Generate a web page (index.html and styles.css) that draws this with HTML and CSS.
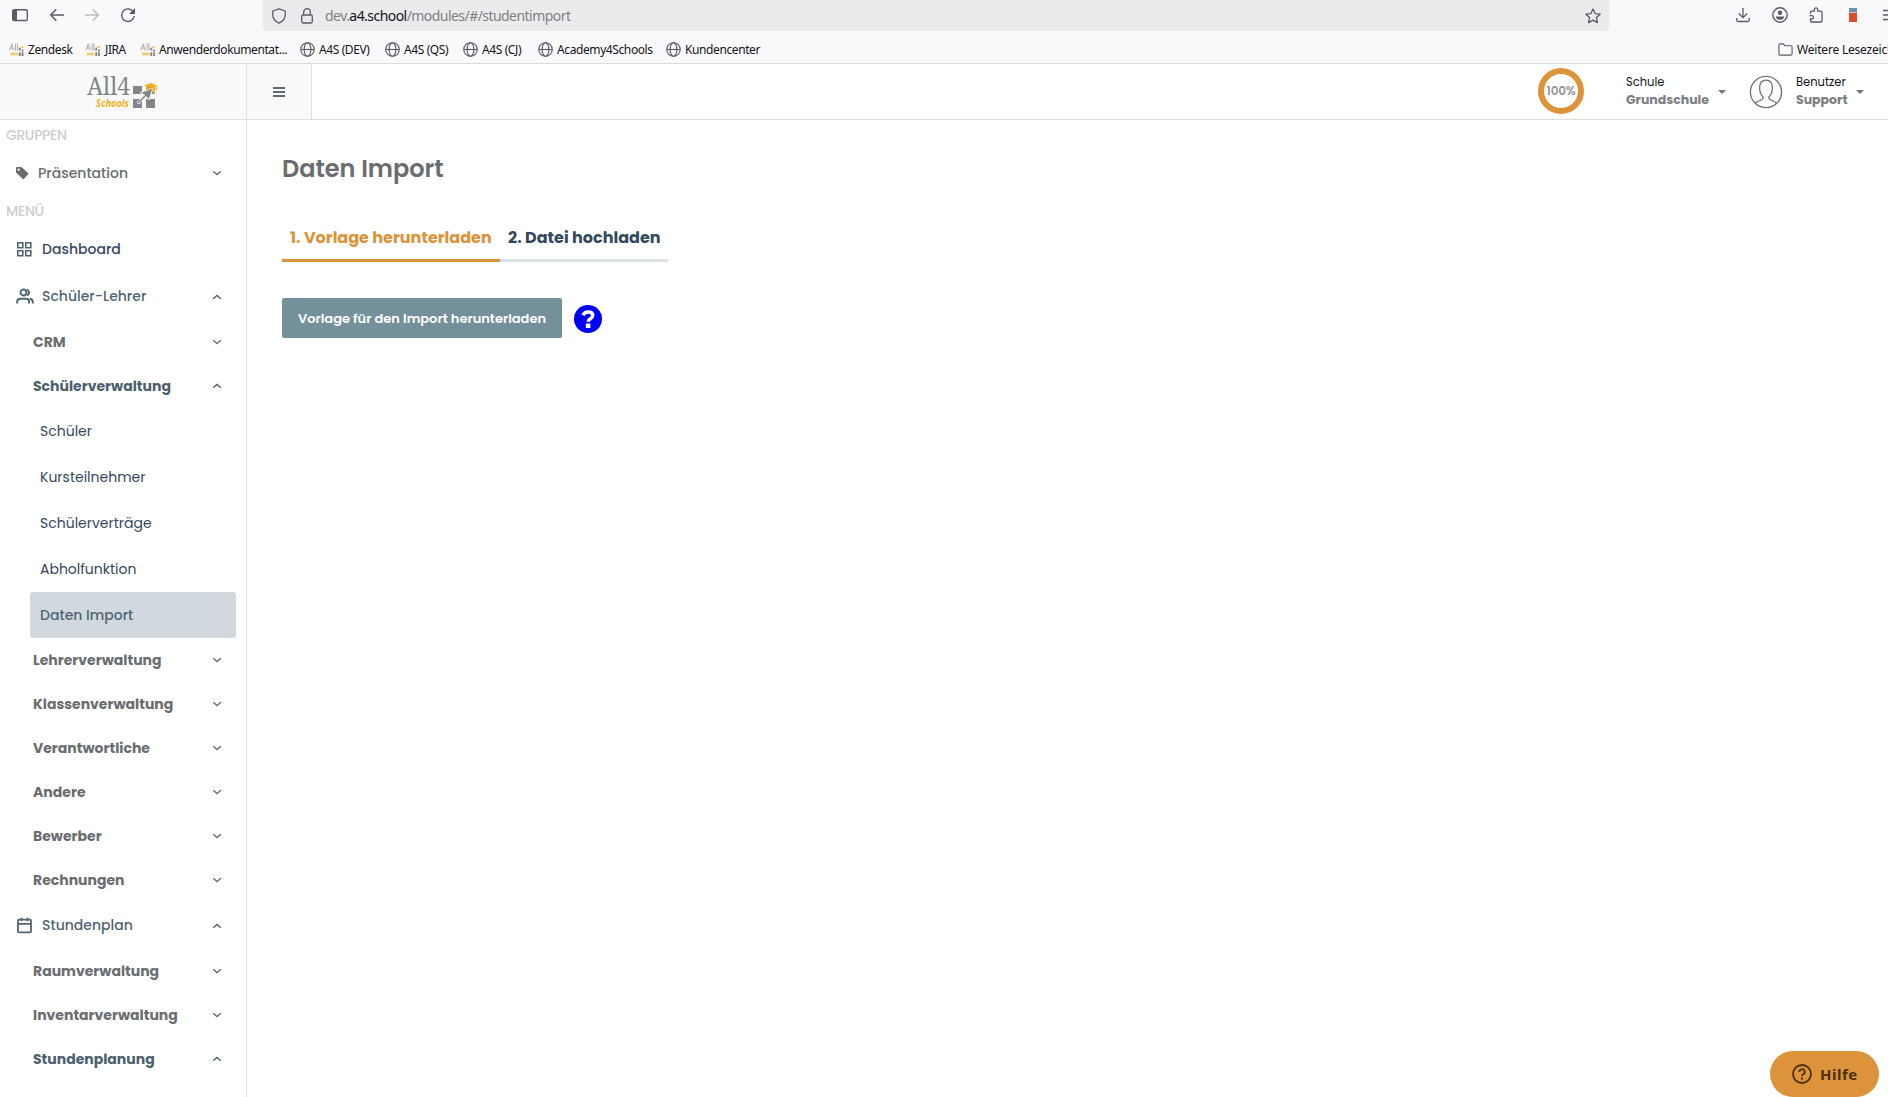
FILE: index.html
```
<!DOCTYPE html>
<html lang="de">
<head>
    <meta charset="UTF-8">
    <meta name="viewport" content="width=device-width, initial-scale=1.0">
    <title>Daten Import</title>
    <link rel="stylesheet" href="styles.css">
</head>
<body>
    <svg class="sprite" width="0" height="0">
        <symbol id="globe" viewBox="0 0 16 16">
            <g fill="none" stroke="#5b5b66" stroke-width="1.2">
                <circle cx="8" cy="8" r="7.2"/>
                <ellipse cx="8" cy="8" rx="3.6" ry="7.2"/>
                <path d="M1 8h14"/>
            </g>
        </symbol>
        <symbol id="down" viewBox="0 0 10 6"><path d="M1.2 1.2 5 4.6 8.8 1.2" fill="none" stroke="currentColor" stroke-width="1.3"/></symbol>
        <symbol id="up" viewBox="0 0 10 6"><path d="M1.2 4.8 5 1.4 8.8 4.8" fill="none" stroke="currentColor" stroke-width="1.3"/></symbol>
        <symbol id="favicon" viewBox="0 0 16 16">
            <path d="m1 9 2.500-7L5.500 9M2 6.500h3M7.500 1.500V9M9.500 1.500V9" fill="none" stroke="#a5a5a5" stroke-width="1"/>
            <path d="M11 6h2v3h-2zM14 8h2v2h-2zM11 11h2v4h-2zM14 11h2v4h-2z" fill="#858585"/>
            <path d="M2 11.500h8v2.500H2zM13 4.500h3v2h-3z" fill="#f6c766"/>
        </symbol>
    </svg>

    <!-- Browser toolbar -->
    <div class="toolbar">
        <div class="nav-buttons">
            <svg width="18" height="16" viewBox="0 0 18 16"><rect x="1.7" y="2.7" width="14.6" height="10.800" rx="1.5" fill="none" stroke="#5b5b66" stroke-width="1.4"/><path d="M2 3h4v10H2z" fill="#5b5b66"/></svg>
            <svg width="16" height="16" viewBox="0 0 16 16"><path d="M15 8H2M7.300 2.300 1.700 8l5.600 5.700" fill="none" stroke="#5b5b66" stroke-width="1.4"/></svg>
            <svg width="16" height="16" viewBox="0 0 16 16"><path d="M1 8h13M8.700 2.300 14.300 8l-5.600 5.700" fill="none" stroke="#bcbcc2" stroke-width="1.4"/></svg>
            <svg width="16" height="16" viewBox="0 0 16 16"><path d="M13.600 5.200A6.300 6.300 0 1 0 14.300 9" fill="none" stroke="#5b5b66" stroke-width="1.4"/><path d="M15 1v6H9z" fill="#5b5b66"/></svg>
        </div>
        <div class="url-bar">
            <svg width="16" height="16" viewBox="0 0 16 16"><path d="M8 .9 14.300 3v3.500c0 3.800-2.400 7-6.300 8.600C4.100 13.500 1.700 10.300 1.700 6.500V3z" fill="none" stroke="#5b5b66" stroke-width="1.3" stroke-linejoin="round"/></svg>
            <svg class="lock" width="14" height="16" viewBox="0 0 14 16"><rect x="1.7" y="7" width="10.600" height="8" rx="1.4" fill="none" stroke="#5b5b66" stroke-width="1.3"/><path d="M3.700 7V4a3.300 3.300 0 0 1 6.600 0v3" fill="none" stroke="#5b5b66" stroke-width="1.3"/></svg>
            <span class="url">dev.<b>a4.school</b>/modules/#/studentimport</span>
            <svg class="star" width="16" height="16" viewBox="0 0 16 16"><path d="m8 1 2.100 4.600 5 .6-3.700 3.400 1 5L8 12.100l-4.400 2.500 1-5L.9 6.200l5-.6z" fill="none" stroke="#5b5b66" stroke-width="1.3" stroke-linejoin="round"/></svg>
        </div>
        <div class="tool-icons">
            <svg width="16" height="16" viewBox="0 0 16 16"><path d="M8 1v9.500M3.800 6.500 8 10.700l4.200-4.200M1.700 11v2c0 1 .6 1.500 1.500 1.500h9.600c.9 0 1.500-.5 1.500-1.500v-2" fill="none" stroke="#5b5b66" stroke-width="1.3"/></svg>
            <svg width="16" height="16" viewBox="0 0 16 16"><circle cx="8" cy="8" r="7.200" fill="none" stroke="#5b5b66" stroke-width="1.4"/><circle cx="8" cy="5.700" r="2.200" fill="#5b5b66"/><path d="M3.800 9.500h8.400c0 2-1.800 3.300-4.200 3.300s-4.200-1.300-4.200-3.300z" fill="#5b5b66"/></svg>
            <svg width="16" height="16" viewBox="0 0 16 16"><path d="M2.500 7V5.200c0-.6.4-1 1-1H6.300V2.500a1.700 1.700 0 0 1 3.400 0v1.700H13c.6 0 1 .4 1 1V14c0 .6-.4 1-1 1H3.500c-.6 0-1-.4-1-1v-2h1.300a1.700 1.700 0 0 0 0-3.400H1.500" fill="none" stroke="#5b5b66" stroke-width="1.3"/></svg>
            <svg width="16" height="16" viewBox="0 0 16 16"><path d="M4 1h8v5H4z" fill="#6f8fac"/><path d="M4 6h8v9H4z" fill="#d94f2b"/><path d="M4 5.500h8" stroke="#b9c4cc"/></svg>
            <svg width="16" height="16" viewBox="0 0 16 16"><path d="M1 3.500h14M1 8h14M1 12.500h14" stroke="#5b5b66" stroke-width="1.3"/></svg>
        </div>
    </div>
    <div class="bookmarks">
        <span class="bm bm-zendesk"><svg><use href="#favicon"/></svg>Zendesk</span>
        <span class="bm bm-jira"><svg><use href="#favicon"/></svg>JIRA</span>
        <span class="bm bm-docs"><svg><use href="#favicon"/></svg>Anwenderdokumentat...</span>
        <span class="bm bm-dev"><svg><use href="#globe"/></svg>A4S (DEV)</span>
        <span class="bm bm-qs"><svg><use href="#globe"/></svg>A4S (QS)</span>
        <span class="bm bm-cj"><svg><use href="#globe"/></svg>A4S (CJ)</span>
        <span class="bm bm-academy"><svg><use href="#globe"/></svg>Academy4Schools</span>
        <span class="bm"><svg><use href="#globe"/></svg>Kundencenter</span>
        <span class="bm bm-more"><svg viewBox="0 0 16 16"><path d="M1 12.500v-9C1 2.600 1.600 2 2.500 2h3l2 2h6c.9 0 1.500.6 1.500 1.500v7c0 .9-.6 1.500-1.500 1.500h-11C1.600 14 1 13.400 1 12.500z" fill="none" stroke="#5b5b66" stroke-width="1.2"/></svg>Weitere Lesezeichen</span>
    </div>

    <!-- App header -->
    <header class="header">
        <div class="brand">
            <svg width="72" height="36" viewBox="0 0 72 36">
                <text x="1" y="21" font-family="Noto Serif, Liberation Serif, serif" font-size="26" textLength="43" lengthAdjust="spacingAndGlyphs" fill="#858585">All4</text>
                <text class="logo-sub" x="10" y="33" textLength="33" lengthAdjust="spacingAndGlyphs">Schools</text>
                <path d="M47 12h9v8h-9zM60 12h9v8h-9zM47 25h9v9h-9zM60 25h9v9h-9z" fill="#858585"/>
                <path d="m51 28.500 7.500-7.500-4-2.500L67 14l-4 12-3-3.500-7 7.500z" fill="#858585" stroke="#f8f9fb" stroke-width="1"/>
                <path d="m58 11.500 7-2.500 6 2.500-6 2.500zM60 12.500h2v2h5v-2h2v7h-2v-4h-7zM69.700 11.500h1.200v5h-1.200z" fill="#f5b11c"/>
            </svg>
        </div>
        <div class="menu-toggle"><i></i><i></i><i></i></div>
        <div class="progress">100%</div>
        <div class="picker school">
            <div><span>Schule</span><strong>Grundschule</strong></div>
            <i class="caret"></i>
        </div>
        <svg class="avatar" width="34" height="34" viewBox="0 0 34 34"><g fill="none" stroke="#6f7376" stroke-width="1.3"><circle cx="17" cy="17" r="15.600"/><path d="M6.500 28.500c1-2 3-2.500 5-3.200 2.200-.8 3-1.300 2.600-3.300-2-2-3.500-4.500-3.500-9 0-5.500 2.500-7.800 6.400-7.800s6.400 2.300 6.400 7.800c0 4.500-1.500 7-3.500 9-.4 2 .4 2.500 2.600 3.300 2 .7 4 1.200 5 3.200"/></g></svg>
        <div class="picker user">
            <div><span>Benutzer</span><strong>Support</strong></div>
            <i class="caret"></i>
        </div>
    </header>

    <div class="layout">
        <nav class="sidebar">
            <h6>GRUPPEN</h6>
            <a class="item group"><svg width="14" height="14" viewBox="0 0 14 14"><path d="M1 2v4.500l6.500 6.200c.5.500 1 .5 1.500 0l4-4.200c.5-.5.5-1 0-1.500L6.500 1H2C1.400 1 1 1.400 1 2z" fill="currentColor"/><circle cx="3.700" cy="3.700" r="1.100" fill="#fff"/></svg><span>Präsentation</span><svg class="chev"><use href="#down"/></svg></a>
            <h6>MENÜ</h6>
            <a class="item dashboard"><svg width="17" height="17" viewBox="0 0 17 17"><path d="M1.800 1.800h5v5h-5zM9.800 1.800h5v5h-5zM1.800 9.800h5v5h-5zM9.800 9.800h5v5h-5z" fill="none" stroke="#506572" stroke-width="1.6"/></svg><span>Dashboard</span></a>
            <a class="item"><svg width="18" height="17" viewBox="0 0 18 17"><g fill="none" stroke="currentColor" stroke-width="1.9"><circle cx="7.500" cy="4.500" r="3"/><path d="M1.200 15.500v-1.500c0-2 1.200-3.200 3.200-3.200h5.500c2 0 3.200 1.200 3.200 3.200v1.500M11 1.700a3 3 0 0 1 0 5.700M13.800 10.800c1.900.3 3 1.500 3 3.200v1.500"/></g></svg><span class="wide">Schüler-Lehrer</span><svg class="chev"><use href="#up"/></svg></a>
            <a class="sub">CRM<svg class="chev"><use href="#down"/></svg></a>
            <a class="sub open">Schülerverwaltung<svg class="chev"><use href="#up"/></svg></a>
            <a class="leaf">Schüler</a>
            <a class="leaf">Kursteilnehmer</a>
            <a class="leaf">Schülerverträge</a>
            <a class="leaf">Abholfunktion</a>
            <a class="leaf active">Daten Import</a>
            <a class="sub">Lehrerverwaltung<svg class="chev"><use href="#down"/></svg></a>
            <a class="sub">Klassenverwaltung<svg class="chev"><use href="#down"/></svg></a>
            <a class="sub">Verantwortliche<svg class="chev"><use href="#down"/></svg></a>
            <a class="sub">Andere<svg class="chev"><use href="#down"/></svg></a>
            <a class="sub">Bewerber<svg class="chev"><use href="#down"/></svg></a>
            <a class="sub">Rechnungen<svg class="chev"><use href="#down"/></svg></a>
            <a class="item"><svg width="17" height="17" viewBox="0 0 17 17"><path d="M3 2.700h11c.6 0 1 .4 1 1v10.600c0 .6-.4 1-1 1H3c-.6 0-1-.4-1-1V3.700c0-.6.4-1 1-1zM2 6.800h13M5.500.8v3.500M11.500.8v3.500" fill="none" stroke="currentColor" stroke-width="1.8"/></svg><span>Stundenplan</span><svg class="chev"><use href="#up"/></svg></a>
            <a class="sub">Raumverwaltung<svg class="chev"><use href="#down"/></svg></a>
            <a class="sub">Inventarverwaltung<svg class="chev"><use href="#down"/></svg></a>
            <a class="sub open">Stundenplanung<svg class="chev"><use href="#up"/></svg></a>
        </nav>

        <main class="content">
            <h1>Daten Import</h1>
            <div class="tabs">
                <a class="tab tab-active">1. Vorlage herunterladen</a>
                <a class="tab tab-upload">2. Datei hochladen</a>
            </div>
            <div class="actions">
                <button class="download">Vorlage für den Import herunterladen</button>
                <svg class="help-dot" width="28" height="28" viewBox="0 0 28 28"><circle cx="14" cy="14" r="14" fill="#00f"/><path d="M9 10.300C10 8 11.700 7 14.200 7c2.600 0 4.500 1.300 4.500 3.500 0 3.500-4.600 3-4.600 6.200" fill="none" stroke="#fff" stroke-width="3.6"/><path d="M11.800 18.500h4.600v4.500h-4.600z" fill="#fff"/></svg>
            </div>
        </main>
    </div>

    <button class="help-button">
        <svg width="20" height="20" viewBox="0 0 20 20"><circle cx="10" cy="10" r="9" fill="none" stroke="currentColor" stroke-width="1.8"/><path d="M7.300 8a2.700 2.700 0 1 1 4 2.300c-.9.5-1.300.9-1.300 1.900" fill="none" stroke="currentColor" stroke-width="1.8"/><circle cx="10" cy="14.700" r="1.150" fill="currentColor"/></svg>
        Hilfe
    </button>
</body>
</html>
```
FILE: styles.css
```
* {
    box-sizing: border-box;
}

body {
    margin: 0;
    height: 1097px;
    overflow: hidden;
    background: #fff;
    font-family: Poppins, Inter, "Liberation Sans", sans-serif;
    color: #6a6d70;
}

.sprite {
    position: absolute;
}

/* Browser toolbar */
.toolbar {
    display: flex;
    height: 32px;
    background: #f9f9fb;
    overflow: hidden;
}

.nav-buttons {
    display: flex;
    flex: none;
    width: 263px;
    padding: 7px 0 0 11px;
    gap: 19.7px;
}

.url-bar {
    display: flex;
    align-items: center;
    flex: none;
    width: 1346px;
    height: 31px;
    padding: 0 8px;
    background: #ebebed;
    border-radius: 0 0 4px 4px;
}

.lock {
    margin: 0 11px 0 13px;
}

.url {
    font: 14px "Noto Sans", sans-serif;
    letter-spacing: -0.55px;
    color: #7f7f83;
}

.url b {
    font-weight: normal;
    color: #15141a;
}

.star {
    margin-left: auto;
}

.tool-icons {
    display: flex;
    flex: none;
    padding: 7px 0 0 126px;
    gap: 20.7px;
}

.tool-icons svg {
    flex: none;
}

.bookmarks {
    display: flex;
    height: 32px;
    padding: 4px 0 0 8px;
    background: #f9f9fb;
    border-bottom: 1px solid #dcdcde;
    overflow: hidden;
}

.bm {
    display: flex;
    align-items: center;
    flex: none;
    height: 27px;
    padding-bottom: 1px;
    gap: 4px;
    font: 12px "Noto Sans", sans-serif;
    letter-spacing: -0.4px;
    color: #15141a;
    white-space: nowrap;
}

.bm svg {
    flex: none;
    width: 15px;
    height: 15px;
}

.bm-zendesk { width: 76px; }
.bm-jira { width: 56px; }
.bm-docs { width: 160px; }
.bm-dev { width: 85px; }
.bm-qs { width: 78px; }
.bm-cj { width: 75px; }
.bm-academy { width: 128px; }

.bm-zendesk svg {
    width: 16px;
}

.bm-jira svg {
    width: 17px;
}

.bm-more {
    width: 110px;
    margin-left: auto;
    letter-spacing: -0.2px;
}

/* App header */
.header {
    display: flex;
    align-items: center;
    height: 56px;
    border-bottom: 1px solid #dfe0e2;
}

.brand,
.menu-toggle {
    height: 55px;
    background: #f8f9fb;
    border-right: 1px solid #dfe0e2;
}

.brand {
    width: 247px;
    padding: 10px 0 0 86px;
}

.menu-toggle {
    display: flex;
    flex-direction: column;
    align-items: center;
    justify-content: center;
    gap: 2px;
    width: 65px;
    padding-top: 1px;
}

.menu-toggle i {
    width: 12px;
    height: 2px;
    background: #63686d;
}

.logo-sub {
    font: bold italic 11px "Open Sans", sans-serif;
    fill: #f5b11c;
}

.progress {
    display: flex;
    align-items: center;
    justify-content: center;
    width: 46px;
    height: 46px;
    margin: -1px 0 0 1226px;
    border: 6px solid #dc9339;
    border-radius: 50%;
    font-size: 12px;
    font-weight: 600;
    letter-spacing: -0.2px;
    color: #949698;
}

.picker {
    display: flex;
    align-items: center;
}

.picker div {
    display: flex;
    flex-direction: column;
    margin-top: -2px;
}

.picker span {
    font-size: 11.5px;
    line-height: 17px;
    color: #15181a;
}

.picker strong {
    font-size: 12.5px;
    font-weight: 700;
    line-height: 17px;
    color: #7b7d80;
}

.school {
    width: 123px;
    margin-left: 42px;
}

.school div {
    width: 92px;
}

.user div {
    width: 60px;
}

.caret {
    border: 4px solid transparent;
    border-top-color: #74777a;
    border-bottom: 0;
}

.avatar {
    margin: 1px 13px 0 0;
}

/* Sidebar */
.layout {
    display: flex;
    height: 977px;
}

.sidebar {
    flex: none;
    width: 247px;
    border-right: 1px solid #dfe0e2;
}

.sidebar h6 {
    margin: 0;
    padding-left: 6px;
    font-size: 14px;
    font-weight: 500;
    line-height: 30px;
    letter-spacing: -0.4px;
    color: #cdcecf;
}

.item,
.sub,
.leaf {
    display: flex;
    align-items: center;
    font-size: 14px;
}

.item {
    height: 47px;
    padding: 0 24px 0 16px;
    font-weight: 500;
    color: #506572;
}

.item span {
    margin-left: 9px;
}

.item .wide {
    margin-left: 8px;
}

.group {
    height: 46px;
    padding-left: 15px;
    color: #6a6d70;
}

.dashboard {
    color: #34495e;
}

.chev {
    width: 10px;
    height: 6px;
    margin-left: auto;
}

.sub {
    height: 44px;
    padding: 0 24px 0 33px;
    font-weight: 700;
    color: #6a6d70;
}

.open {
    color: #4b606d;
}

.leaf {
    height: 46px;
    margin: 0 10px 0 30px;
    padding-left: 10px;
    color: #34495e;
}

.active {
    background: #d1d9df;
    border-radius: 3px;
    font-weight: 500;
    color: #506572;
}

/* Content */
.content {
    padding: 30px 35px;
}

h1 {
    margin: 0;
    font-size: 24px;
    font-weight: 600;
    line-height: 38px;
}

.tabs {
    display: flex;
    margin-top: 29px;
}

.tab {
    height: 45px;
    padding-left: 8px;
    border-bottom: 3px solid #dbe2e6;
    font-size: 16px;
    font-weight: 700;
    line-height: 42px;
    white-space: nowrap;
    color: #34495e;
}

.tab-active {
    width: 218px;
    color: #dc9339;
    border-color: #dc9339;
}

.tab-upload {
    width: 168px;
}

.actions {
    display: flex;
    align-items: center;
    gap: 12px;
    margin-top: 36px;
}

.download {
    width: 280px;
    height: 40px;
    padding: 1px 0 0;
    border: 0;
    border-radius: 2px;
    background: #74909b;
    font: 600 13px Poppins, Inter, sans-serif;
    color: #fff;
}

.help-dot {
    margin-top: 1px;
}

/* Floating support button */
.help-button {
    position: absolute;
    right: 9px;
    bottom: 0;
    display: flex;
    align-items: center;
    gap: 8px;
    width: 109px;
    height: 46px;
    padding: 0 0 0 22px;
    border: 0;
    border-radius: 23px;
    background: #dc9339;
    font: bold 15px "Noto Sans", sans-serif;
    letter-spacing: 0.5px;
    color: #4c2f0e;
}
```
